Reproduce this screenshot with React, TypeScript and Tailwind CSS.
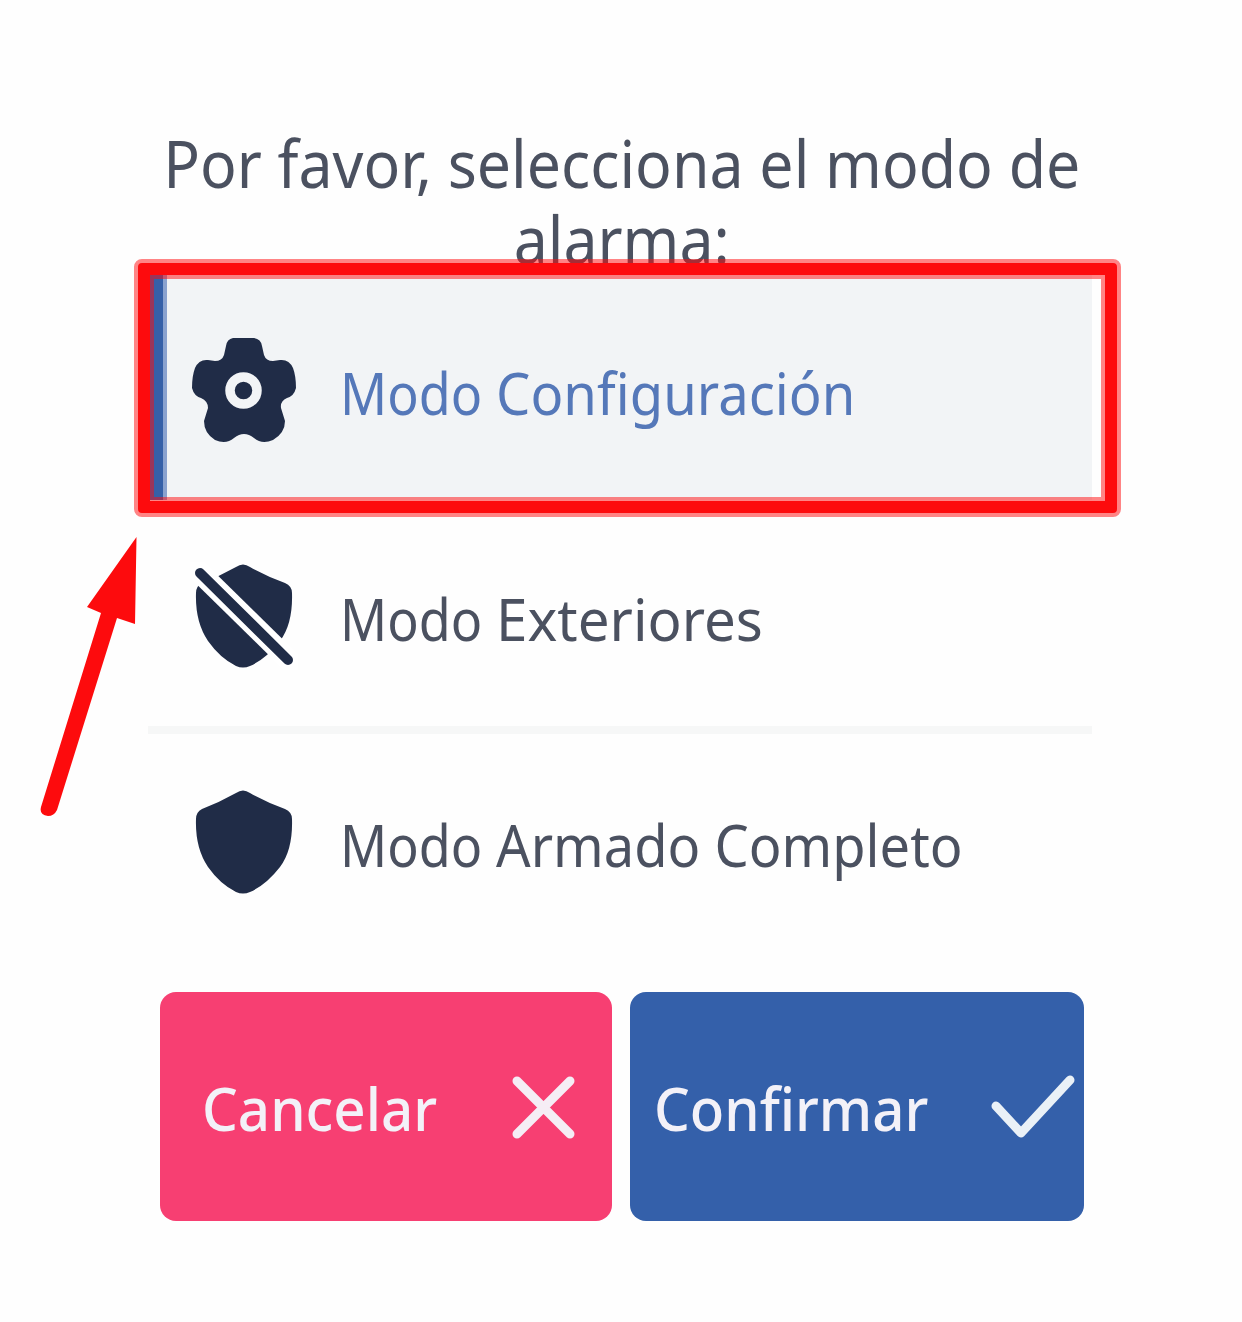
import React from "react";

const NAVY = "#202c47";

function GearIcon() {
  return (
    <svg width="108" height="108" viewBox="190 336 108 108" fill={NAVY}>
      <path d="M233 338H254Q261 339 262 346L264 355Q266 361 273 361L280 360Q289 359 293 368Q296 376 296 388Q294 396 287 398Q280 401 281 408L285 421Q285 433 273 440Q262 445 254 438Q249 434 244 434Q239 434 234 438Q226 445 215 440Q204 433 204 421L208 408Q208 401 201 398Q194 396 192 388Q192 376 195 368Q199 359 208 360L215 361Q222 361 224 355L226 346Q227 339 233 338Z" />
      <circle cx="243.500" cy="390.500" r="13.500" fill="none" stroke="#f2f4f6" strokeWidth="9.500" />
    </svg>
  );
}

const SHIELD =
  "M236 793Q243 788 250 793Q266 802 285 809Q292 812 292 819Q293 850 280 867Q266 885 250 892Q243 895 236 892Q220 884 208 867Q195 848 196 819Q196 812 202 809Q220 802 236 793Z";

function ShieldIcon() {
  return (
    <svg width="108" height="108" viewBox="190 788 108 108" fill={NAVY}>
      <path d={SHIELD} />
    </svg>
  );
}

function ShieldOffIcon() {
  return (
    <svg width="108" height="108" viewBox="190 788 108 108" fill={NAVY}>
      <path d={SHIELD} />
      <path d="M185 784L303 900" stroke="#fff" strokeWidth="21" />
      <path d="M200 799L288 886" stroke={NAVY} strokeWidth="10" strokeLinecap="round" />
    </svg>
  );
}

function Row({ icon, name, nameClass }: { icon: React.ReactNode; name: string; nameClass: string }) {
  return (
    <div className="flex items-center">
      {icon}
      <p className="ml-[42px] mt-[4px] flex whitespace-nowrap text-[58.5px] leading-[78px]">
        <span className="block w-[156px] origin-left scale-x-[0.89]">Modo </span>
        <span className={`block origin-left ${nameClass}`}>{name}</span>
      </p>
    </div>
  );
}

export default function App() {
  return (
    <main className="relative h-[1322px] w-[1242px] overflow-hidden bg-[#fefefe] font-['Noto_Sans',sans-serif] text-[#4b5160]">
      <h1 className="flex h-[275px] justify-center pl-[2px] pt-[124px] text-center text-[66.5px] leading-[76px]">
        <span className="block origin-center scale-x-[0.914] whitespace-nowrap">
          Por favor, selecciona el modo de
          <br />
          alarma:
        </span>
      </h1>
      <section className="ml-[148px] w-[944px]">
        <div className="flex h-[225px] bg-[#f2f4f6] text-[#5578b9]">
          <div className="w-[15px] bg-[#3560a8]" />
          <div className="w-[4px] bg-[#8aa2cf]" />
          <div className="pl-[23px] pt-[61px]">
            <Row icon={<GearIcon />} name="Configuración" nameClass="scale-x-[0.93]" />
          </div>
        </div>
        <div className="h-[226px] pl-[42px] pt-[62px]">
          <Row icon={<ShieldOffIcon />} name="Exteriores" nameClass="scale-x-[0.966]" />
        </div>
        <div className="h-[8px] bg-[#f6f7f7]" />
        <div className="h-[220px] pl-[42px] pt-[54px]">
          <Row icon={<ShieldIcon />} name="Armado Completo" nameClass="scale-x-[0.927]" />
        </div>
      </section>
      <div className="ml-[160px] mt-[38px] flex gap-[18px] text-[59px] font-medium text-[#f3f1f8]">
        <button className="flex h-[229px] w-[452px] items-center rounded-[16px] bg-[#f73f72]">
          <span className="ml-[42px] mt-[4px] block w-[308px] origin-left scale-x-[0.957] text-left">Cancelar</span>
          <svg className="mt-[3px]" width="68" height="68" viewBox="0 0 68 68" fill="none" stroke="#f5edf5" strokeWidth="9" strokeLinecap="round">
            <path d="M7 7L60 60M60 7L7 60" />
          </svg>
        </button>
        <button className="flex h-[229px] w-[454px] items-center rounded-[16px] bg-[#3460aa]">
          <span className="ml-[24px] mt-[4px] block w-[335px] origin-left scale-x-[0.956] text-left">Confirmar</span>
          <svg className="mt-[3px]" width="90" height="68" viewBox="0 0 90 68" fill="none" stroke="#eaf1f7" strokeWidth="9" strokeLinecap="round" strokeLinejoin="round">
            <path d="M7 32L32 59L81 6" />
          </svg>
        </button>
      </div>
      <div className="absolute left-[134px] top-[259px] h-[258px] w-[987px] rounded-[8px] border-[20px] border-[#ff0a0c]/50" />
      <div className="absolute left-[138px] top-[263px] h-[250px] w-[979px] rounded-[4px] border-[12px] border-[#fd0b0d]" />
      <svg className="absolute left-[30px] top-[530px]" width="120" height="300" viewBox="30 530 120 300" fill="#fd0b0d">
        <path d="M136.500 537L87 607L101 613L41 807Q39 815 48 816Q54 816 57 810L117 618L135 624Z" />
      </svg>
    </main>
  );
}
